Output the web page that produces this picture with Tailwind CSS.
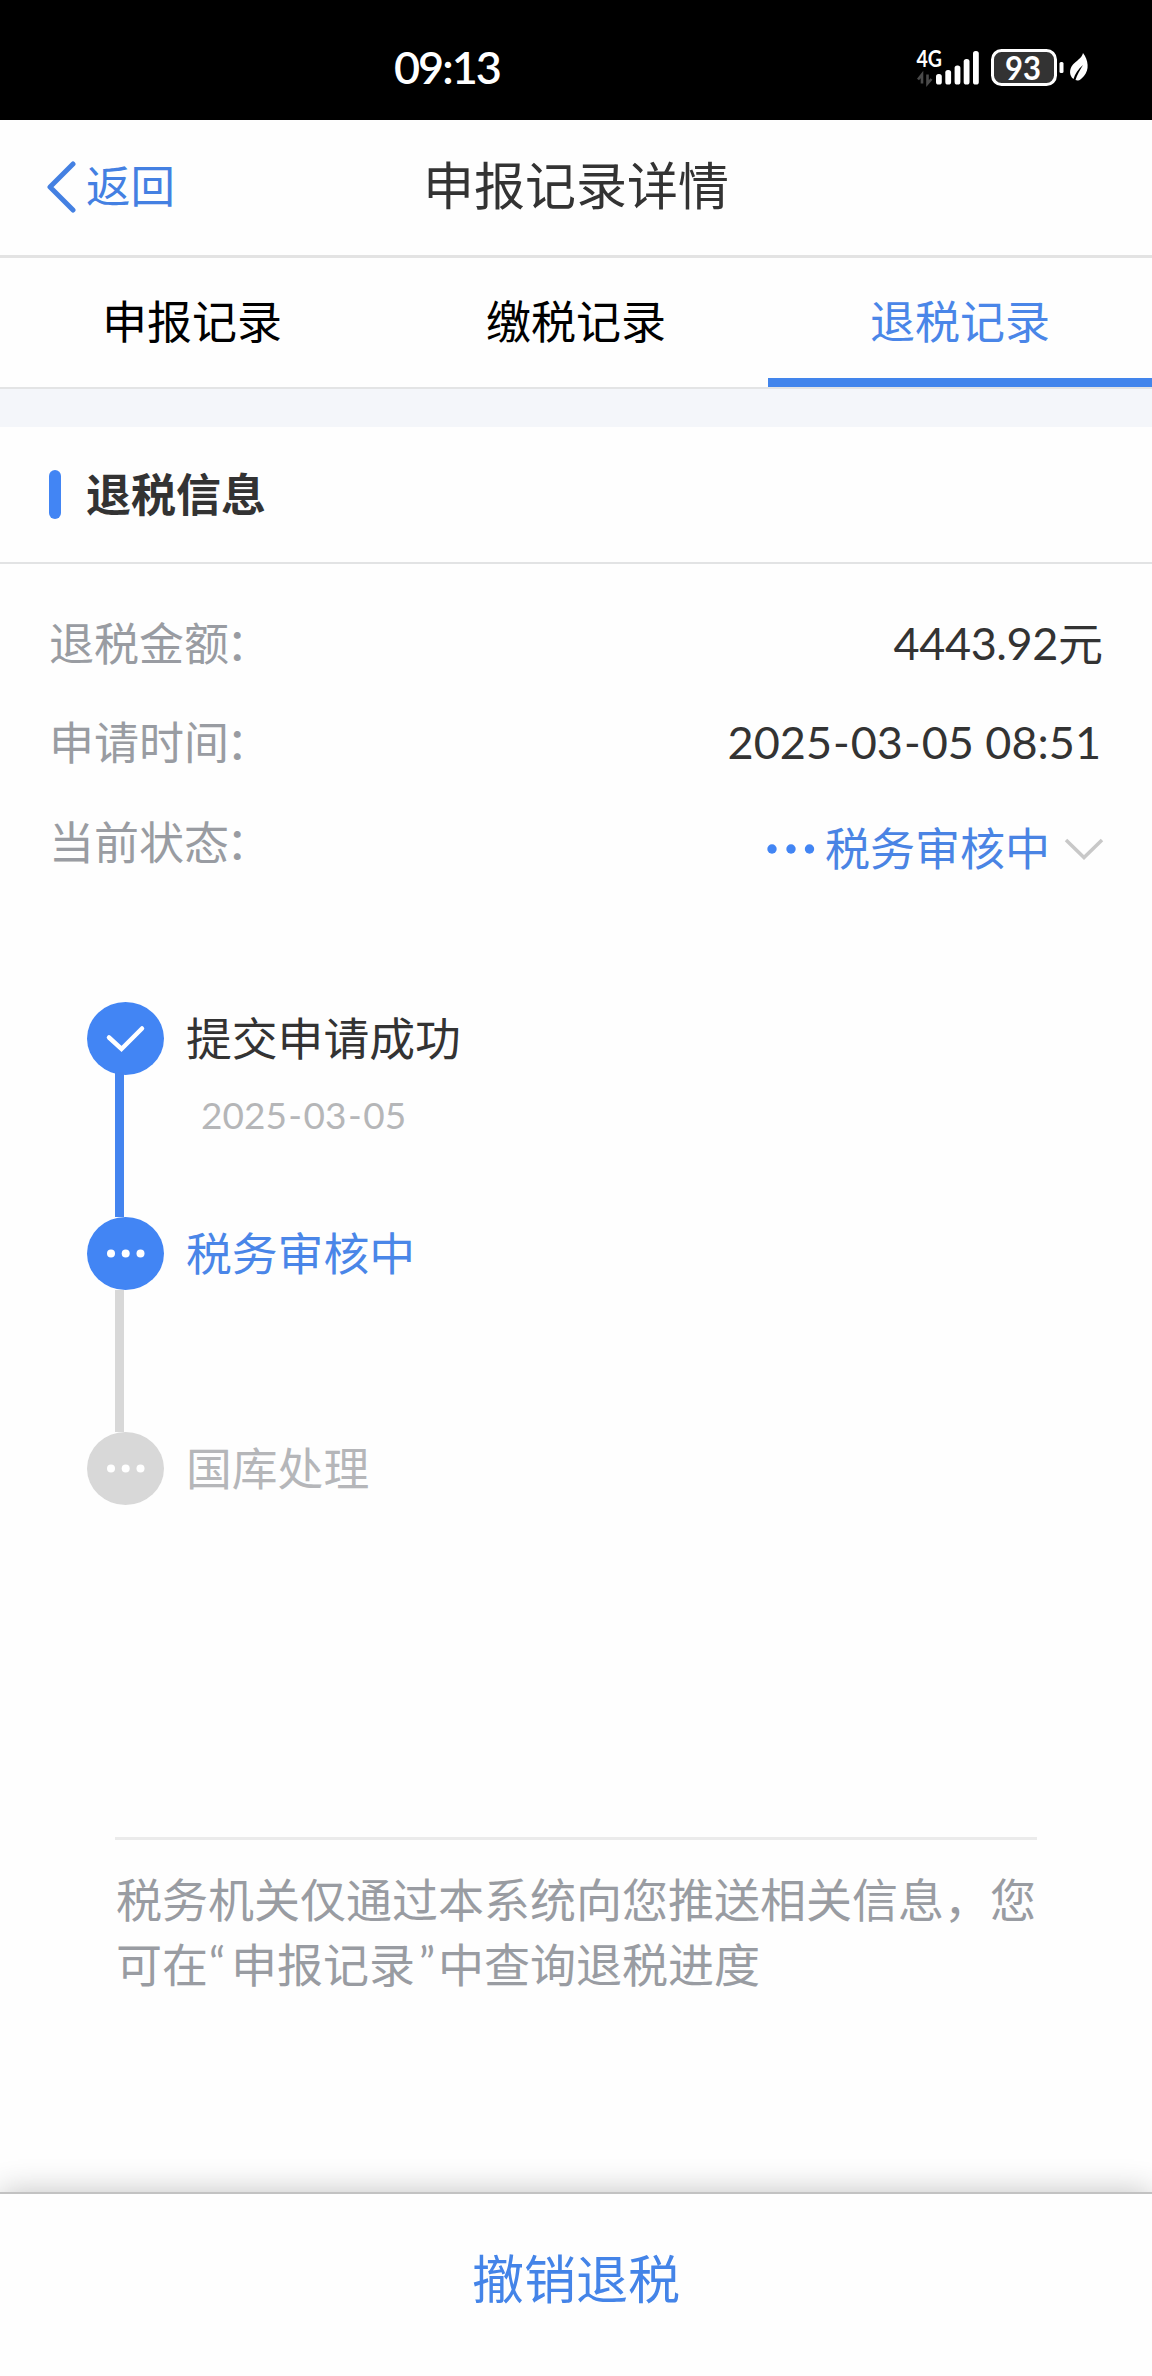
<!DOCTYPE html>
<html lang="zh-CN">
<head>
<meta charset="utf-8">
<title>申报记录详情</title>
<script src="https://cdn.jsdelivr.net/npm/@tailwindcss/browser@4"></script>
</head>
<body class="bg-white">
<div class="flex h-[2376px] w-[1152px] flex-col overflow-hidden bg-[#fefefe] font-['Noto_Sans_CJK_SC',sans-serif] text-[45px] leading-none text-[#333333]">

  <!-- Status bar -->
  <div class="flex h-[120px] shrink-0 items-start bg-black pl-[394px] pr-[62px] text-white">
    <div class="mt-[45px] font-['Lato','Noto_Sans_CJK_SC',sans-serif] text-[45px] font-semibold tracking-[-2px]">09:13</div>
    <svg class="ml-auto mt-[45px] h-[46px] w-[176px]" viewBox="914 45 176 46">
      <text x="916.5" y="67" font-family="Lato, sans-serif" font-weight="700" font-size="22" textLength="25.500" lengthAdjust="spacingAndGlyphs" fill="#fff">4G</text>
      <path d="M918 79.500L922 74.500V83.500M927.500 74.500V83.500L931.500 79" fill="none" stroke="#4a4a4a" stroke-width="2.600"/>
      <g fill="#fff">
        <rect x="936" y="74" width="5.800" height="10.500" rx="2.600"/>
        <rect x="945.300" y="70" width="5.800" height="14.500" rx="2.600"/>
        <rect x="954.600" y="65.500" width="5.800" height="19" rx="2.600"/>
        <rect x="963.700" y="59" width="5.800" height="25.500" rx="2.600"/>
        <rect x="973" y="51" width="5.800" height="33.500" rx="2.600"/>
      </g>
      <rect x="992.500" y="50.500" width="63" height="34" rx="9" fill="#333" stroke="#fff" stroke-width="3"/>
      <text x="1023" y="79.500" text-anchor="middle" font-family="Lato, sans-serif" font-weight="700" font-size="33" textLength="36" lengthAdjust="spacingAndGlyphs" fill="#fff">93</text>
      <rect x="1059.500" y="62" width="4" height="11" rx="1.500" fill="#fff"/>
      <path d="M1083 53C1088.500 60 1089.500 70 1084 76C1081.500 79 1079 81 1077.500 80.500L1075.500 80C1077 75 1080 70 1083 65C1078 69 1075 74 1073.500 79C1069 76 1069 69 1073 64.500C1076 61 1082 58 1083 53Z" fill="#fff"/>
    </svg>
  </div>

  <!-- Title bar -->
  <header class="grid h-[138px] shrink-0 grid-cols-[1fr_auto_1fr] items-center border-b-[3px] border-[#e3e3e3] px-[46px] pb-1">
    <div class="flex items-center gap-[10px] text-[#4480e2]">
      <svg class="mt-[2px] h-[52px] w-[30px]" viewBox="0 0 30 52" fill="none" stroke="currentColor" stroke-width="5" stroke-linecap="round" stroke-linejoin="round"><path d="M27 3L4 26L27 49"/></svg>
      <span class="pb-[3px] text-[44.500px]">返回</span>
    </div>
    <h1 class="pb-1 text-[51px]">申报记录详情</h1>
    <div></div>
  </header>

  <!-- Tabs -->
  <nav class="grid h-[131px] shrink-0 grid-cols-3 border-b-2 border-[#e3e4e5] text-center text-black">
    <div class="pt-[39px]">申报记录</div>
    <div class="pt-[39px]">缴税记录</div>
    <div class="border-b-[9px] border-[#4285ec] pt-[39px] text-[#4a86e8]">退税记录</div>
  </nav>
  <div class="h-[38px] shrink-0 bg-[#f4f6fa]"></div>

  <!-- Section heading -->
  <div class="flex h-[137px] shrink-0 items-center gap-[25px] border-b-2 border-[#e2e3e4] pl-[49px]">
    <span class="h-[49px] w-3 rounded-full bg-[#4285f4]"></span>
    <h2 class="pb-1 font-bold">退税信息</h2>
  </div>

  <!-- Refund details -->
  <dl class="flex h-[326px] shrink-0 flex-col pl-[49px] pr-[49px] pt-[28px]">
    <div class="flex h-[100px] items-center justify-between"><dt class="text-[#999ca2]">退税金额<span class="-ml-[3px]">：</span></dt><dd class="flex items-center"><span class="pt-1 font-['Lato',sans-serif] tracking-[-0.4px]">4443.92</span><span>元</span></dd></div>
    <div class="flex h-[100px] items-center justify-between"><dt class="text-[#999ca2]">申请时间<span class="-ml-[3px]">：</span></dt><dd class="pr-[2px] pt-1 font-['Lato',sans-serif]">2025<span class="px-[1px]">-</span>03<span class="px-[1px]">-</span>05 08:51</dd></div>
    <div class="flex h-[100px] items-center justify-between">
      <dt class="text-[#999ca2]">当前状态<span class="-ml-[3px]">：</span></dt>
      <dd class="-mr-px flex items-center pt-[13px] text-[#4a84e4]">
        <svg class="mr-[10px] mt-[5px] h-[10px] w-[48px]" viewBox="0 0 48 10" fill="#4285f4"><circle cx="5" cy="5" r="4.700"/><circle cx="24" cy="5" r="4.700"/><circle cx="42.500" cy="5" r="4.700"/></svg>
        <span>税务审核中</span>
        <svg class="ml-[14px] mt-[5px] h-[24px] w-[40px]" viewBox="0 0 40 24" fill="none" stroke="#c8c8c8" stroke-width="3.500"><path d="M2 3L20 20.500L38 3"/></svg>
      </dd>
    </div>
  </dl>

  <!-- Progress timeline -->
  <ol class="flex h-[947px] shrink-0 flex-col pl-[87px] pt-[112px] text-[45.800px]">
    <li class="flex h-[215px] gap-[22px]">
      <div class="flex w-[77px] flex-col">
        <svg class="h-[73px] w-[77px] shrink-0" viewBox="0 0 77 73"><ellipse cx="38.500" cy="36.500" rx="38.500" ry="36.500" fill="#4285f4"/><path d="M22 35.500L34.500 47L55 26.500" fill="none" stroke="#fff" stroke-width="4.500" stroke-linecap="round"/></svg>
        <span class="-mt-[3px] ml-[28px] w-[9px] flex-1 bg-[#4484ef]"></span>
      </div>
      <div>
        <div class="pt-[12px]">提交申请成功</div>
        <div class="pl-[15px] pt-[36px] font-['Lato',sans-serif] text-[37px] text-[#b5b6b8]">2025<span class="px-[1.500px]">-</span>03<span class="px-[1.500px]">-</span>05</div>
      </div>
    </li>
    <li class="flex h-[215px] gap-[22px]">
      <div class="flex w-[77px] flex-col">
        <svg class="h-[73px] w-[77px] shrink-0" viewBox="0 0 77 73"><ellipse cx="38.500" cy="36.500" rx="38.500" ry="36.500" fill="#4285f4"/><g fill="#fff"><circle cx="24" cy="36.500" r="4"/><circle cx="38.700" cy="36.500" r="4"/><circle cx="53.500" cy="36.500" r="4"/></g></svg>
        <span class="ml-[28px] w-[9px] flex-1 bg-[#d8d8d8]"></span>
      </div>
      <div class="pt-[12px] text-[#4a86e8]">税务审核中</div>
    </li>
    <li class="flex gap-[22px]">
      <svg class="h-[73px] w-[77px] shrink-0" viewBox="0 0 77 73"><ellipse cx="38.500" cy="36.500" rx="38.500" ry="36.500" fill="#d8d8d8"/><g fill="#fff"><circle cx="24" cy="36.500" r="4"/><circle cx="38.700" cy="36.500" r="4"/><circle cx="53.500" cy="36.500" r="4"/></g></svg>
      <div class="pt-[12px] text-[#b5b6b9]">国库处理</div>
    </li>
  </ol>

  <!-- Notice -->
  <div class="ml-[115px] w-[922px] whitespace-nowrap border-t-[3px] border-[#ebebeb] pl-px pt-[25px] text-[46px] leading-[65px] text-[#999ca2]">
    <div>税务机关仅通过本系统向您推送相关信息，您</div>
    <div class="flex">可在<span class="w-[23px] pl-[1px] font-['Lato',sans-serif] text-[44px]">“</span>申报记录<span class="w-[23px] pl-[4px] font-['Lato',sans-serif] text-[44px]">”</span>中查询退税进度</div>
  </div>

  <!-- Footer action -->
  <footer class="mt-auto flex h-[184px] shrink-0 items-center justify-center border-t-2 border-[#c2c2c2] bg-[#fefefe] pb-[16px] text-[52px] text-[#4484e8] shadow-[0_0_30px_rgba(0,0,0,0.24)]">撤销退税</footer>
</div>
</body>
</html>
